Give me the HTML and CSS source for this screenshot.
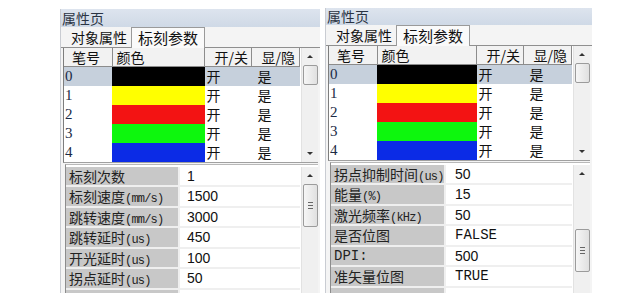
FILE: index.html
```html
<!DOCTYPE html>
<html lang="zh-CN">
<head>
    <meta charset="UTF-8">
    <title>属性页</title>
    <link rel="stylesheet" href="styles.css">
</head>
<body>
    <div class="page">
        <!-- left: first page of marking parameters -->
        <div class="panel panel-left">
            <div class="title">属性页</div>
            <div class="tabs">
                <span class="tab">对象属性</span>
                <span class="tab active">标刻参数</span>
            </div>
            <div class="list">
                <table class="pens">
                    <thead>
                        <tr><th class="c-no">笔号</th><th class="c-color">颜色</th><th class="c-on">开/关</th><th class="c-vis">显/隐</th></tr>
                    </thead>
                    <tbody>
                        <tr class="selected"><td>0</td><td><div class="swatch black"></div></td><td>开</td><td>是</td></tr>
                        <tr><td>1</td><td><div class="swatch yellow"></div></td><td>开</td><td>是</td></tr>
                        <tr><td>2</td><td><div class="swatch red"></div></td><td>开</td><td>是</td></tr>
                        <tr><td>3</td><td><div class="swatch green"></div></td><td>开</td><td>是</td></tr>
                        <tr><td>4</td><td><div class="swatch blue"></div></td><td>开</td><td>是</td></tr>
                    </tbody>
                </table>
                <div class="scrollbar">
                    <span class="arrow up"></span>
                    <span class="thumb small"></span>
                    <span class="fill"></span>
                    <span class="arrow down"></span>
                </div>
            </div>
            <div class="props">
                <div class="grid">
                    <div class="row"><span class="key">标刻次数</span><span class="val">1</span></div>
                    <div class="row"><span class="key">标刻速度<span class="unit">(mm/s)</span></span><span class="val">1500</span></div>
                    <div class="row"><span class="key">跳转速度<span class="unit">(mm/s)</span></span><span class="val">3000</span></div>
                    <div class="row"><span class="key">跳转延时<span class="unit">(us)</span></span><span class="val">450</span></div>
                    <div class="row"><span class="key">开光延时<span class="unit">(us)</span></span><span class="val">100</span></div>
                    <div class="row"><span class="key">拐点延时<span class="unit">(us)</span></span><span class="val">50</span></div>
                    <div class="row"><span class="key"></span><span class="val"></span></div>
                </div>
                <div class="scrollbar">
                    <span class="arrow up"></span>
                    <span class="thumb grip top"><i></i><i></i><i></i></span>
                    <span class="fill"></span>
                </div>
            </div>
        </div>

        <!-- right: same panel scrolled down -->
        <div class="panel panel-right">
            <div class="title">属性页</div>
            <div class="tabs">
                <span class="tab">对象属性</span>
                <span class="tab active">标刻参数</span>
            </div>
            <div class="list">
                <table class="pens">
                    <thead>
                        <tr><th class="c-no">笔号</th><th class="c-color">颜色</th><th class="c-on">开/关</th><th class="c-vis">显/隐</th></tr>
                    </thead>
                    <tbody>
                        <tr class="selected"><td>0</td><td><div class="swatch black"></div></td><td>开</td><td>是</td></tr>
                        <tr><td>1</td><td><div class="swatch yellow"></div></td><td>开</td><td>是</td></tr>
                        <tr><td>2</td><td><div class="swatch red"></div></td><td>开</td><td>是</td></tr>
                        <tr><td>3</td><td><div class="swatch green"></div></td><td>开</td><td>是</td></tr>
                        <tr><td>4</td><td><div class="swatch blue"></div></td><td>开</td><td>是</td></tr>
                    </tbody>
                </table>
                <div class="scrollbar">
                    <span class="arrow up"></span>
                    <span class="thumb small"></span>
                    <span class="fill"></span>
                    <span class="arrow down"></span>
                </div>
            </div>
            <div class="props">
                <div class="grid">
                    <div class="row"><span class="key">拐点抑制时间<span class="unit">(us)</span></span><span class="val">50</span></div>
                    <div class="row"><span class="key">能量<span class="unit">(%)</span></span><span class="val">15</span></div>
                    <div class="row"><span class="key">激光频率<span class="unit">(kHz)</span></span><span class="val">50</span></div>
                    <div class="row"><span class="key">是否位图</span><span class="val mono">FALSE</span></div>
                    <div class="row"><span class="key mono">DPI:</span><span class="val">500</span></div>
                    <div class="row"><span class="key">准矢量位图</span><span class="val mono">TRUE</span></div>
                    <div class="row"><span class="key"></span><span class="val"></span></div>
                </div>
                <div class="scrollbar">
                    <span class="arrow up"></span>
                    <span class="thumb grip low"><i></i><i></i><i></i></span>
                    <span class="fill"></span>
                </div>
            </div>
        </div>
    </div>
</body>
</html>
```

FILE: styles.css
```css
/* Basic reset */
* {
    margin: 0;
    padding: 0;
    box-sizing: border-box;
}

body {
    font-family: "Noto Sans CJK SC", "Liberation Sans", sans-serif;
    background-color: #fff;
    color: #111;
    width: 640px;
    height: 293px;
    overflow: hidden;
}

.page {
    display: flex;
    align-items: flex-start;
    gap: 5px;
    padding-left: 60px;
}

/* Panel window */
.panel {
    background-color: #f4f4f4;
    border-left: 1px solid #c9ccd2;
    height: 300px;
    display: flex;
    flex-direction: column;
}

.panel-left {
    width: 260px;
    margin-top: 9px;
}

.panel-right {
    width: 267px;
    margin-top: 8px;
}

.title {
    height: 18px;
    line-height: 18px;
    font-size: 14px;
    padding-left: 1px;
    color: #2b3443;
    background: linear-gradient(#dde4ee, #cfd9e6);
}

.panel-right .title {
    height: 17px;
    line-height: 17px;
}

/* Tabs */
.tabs {
    height: 21px;
    display: flex;
    align-items: flex-end;
    padding-left: 7px;
    border-bottom: 1px solid #8f8f8f;
}

.tab {
    font-size: 14px;
    line-height: 18px;
    padding: 0 4px 0 3px;
    height: 19px;
}

.tab.active {
    height: 21px;
    background-color: #fafafa;
    border: 1px solid #9a9a9a;
    border-bottom: none;
    padding: 0 6px;
    margin-bottom: -1px;
    line-height: 19px;
    font-size: 15px;
}

/* Pen list */
.list {
    display: flex;
    margin-left: 2px;
    margin-right: 2px;
    border-left: 1px solid #7d7d7d;
    border-bottom: 1px solid #a0a0a0;
    background-color: #fff;
}

.pens {
    flex: 1;
    border-collapse: collapse;
    font-size: 14px;
    table-layout: fixed;
}

.pens th {
    height: 18px;
    font-weight: normal;
    text-align: left;
    line-height: 16px;
    background-color: #f2f2f2;
    border-right: 1px solid #8c8c8c;
    border-bottom: 1px solid #8c8c8c;
    padding-left: 4px;
}

.pens th.c-no { width: 48px; padding-left: 8px; }
.pens th.c-on { width: 47px; text-align: right; padding-right: 3px; }
.pens th.c-vis { width: 48px; text-align: right; padding-right: 4px; }

.pens td {
    height: 19px;
    line-height: 18px;
    padding: 0 2px;
    vertical-align: top;
    font-size: 14px;
}

.pens td:first-child {
    font-family: "Liberation Serif", serif;
    font-size: 15px;
    color: #1b2a45;
    padding-left: 1px;
}

.pens td:nth-child(2) {
    padding: 0;
}

.pens td:nth-child(4) {
    padding-left: 6px;
}

.pens tr.selected td {
    background-color: #c6d0dc;
}

.pens tr.selected td:nth-child(2) {
    background-color: #000;
}

.swatch {
    height: 19px;
}

.black { background-color: #000; }
.yellow { background-color: #ffff00; }
.red { background-color: #f31313; }
.green { background-color: #0df70d; }
.blue { background-color: #0b2be6; }

/* Scrollbars */
.scrollbar {
    width: 17px;
    margin-left: 1px;
    background-color: #f0f0f0;
    display: flex;
    flex-direction: column;
    align-items: center;
    border-left: 1px solid #e2e2e2;
}

.arrow {
    height: 17px;
    width: 15px;
    display: flex;
    align-items: center;
    justify-content: center;
}

.arrow::before {
    content: "";
    border-left: 3px solid transparent;
    border-right: 3px solid transparent;
}

.arrow.up::before {
    border-bottom: 3px solid #333;
}

.arrow.down::before {
    border-top: 3px solid #333;
}

.fill {
    flex: 1;
}

.thumb {
    width: 15px;
    border: 1px solid #9b9b9b;
    border-radius: 2px;
    background: linear-gradient(to right, #f6f6f6, #e0e0e0);
    display: flex;
    flex-direction: column;
    align-items: center;
    justify-content: center;
    gap: 2px;
}

.thumb.small {
    height: 20px;
}

.thumb.grip {
    height: 43px;
}

.thumb.low {
    margin-top: 47px;
}

.thumb i {
    display: block;
    width: 5px;
    height: 1px;
    background-color: #666;
}

/* Property grid */
.props {
    display: flex;
    flex: 1;
    margin: 1px 2px 0 4px;
    padding-top: 2px;
    border-left: 1px solid #8c8c8c;
    border-top: 1px solid #b8b8b8;
    background-color: #fff;
}

.grid {
    flex: 1;
    display: flex;
    flex-direction: column;
}

.row {
    display: grid;
    grid-template-columns: 114px 1fr;
    height: 20.6px;
    border-bottom: 2px solid #efefef;
    font-size: 14px;
    line-height: 19px;
    overflow: hidden;
}

.panel-right .row {
    grid-template-columns: 115px 1fr;
}

.key {
    background-color: #c8c8c8;
    padding-left: 3px;
    color: #222;
    border-right: 2px solid #efefef;
    white-space: nowrap;
    overflow: hidden;
}

.val {
    padding-left: 7px;
    font-family: "Liberation Sans", sans-serif;
    font-size: 14px;
}

.panel-right .val {
    padding-left: 9px;
}

.unit {
    font-family: "Liberation Mono", monospace;
    font-size: 12px;
    letter-spacing: -0.8px;
}

.mono {
    font-family: "Liberation Mono", monospace !important;
    font-size: 14px;
}
```
